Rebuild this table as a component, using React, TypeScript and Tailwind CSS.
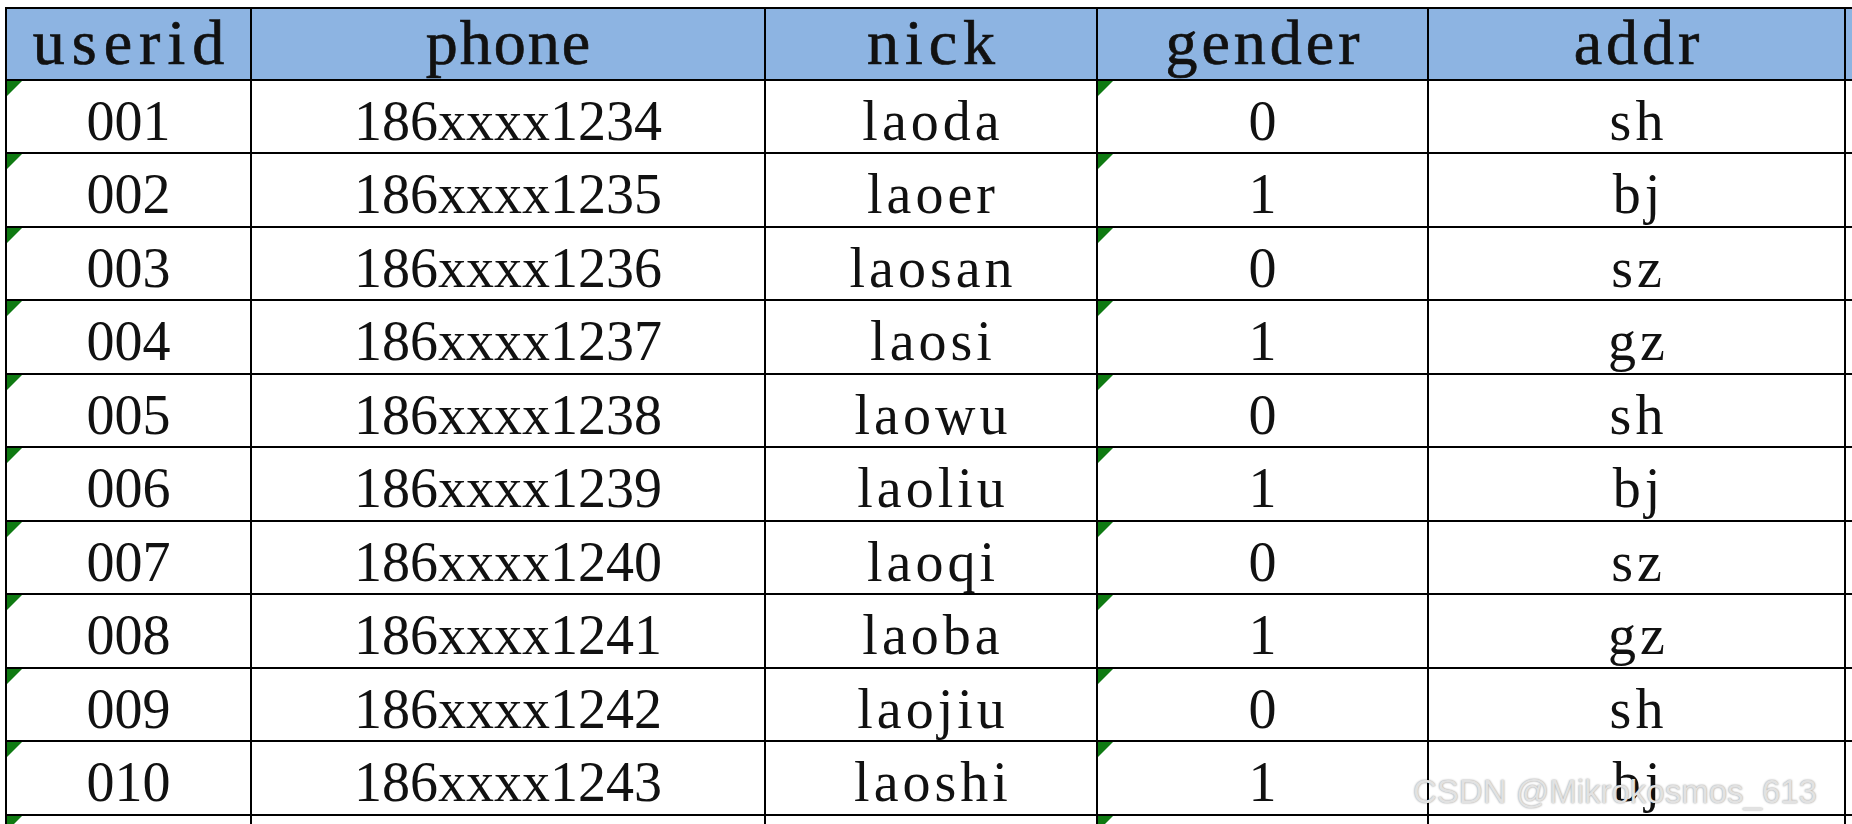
import React from 'react';

const rows = [
  ['001', '186xxxx1234', 'laoda', '0', 'sh'],
  ['002', '186xxxx1235', 'laoer', '1', 'bj'],
  ['003', '186xxxx1236', 'laosan', '0', 'sz'],
  ['004', '186xxxx1237', 'laosi', '1', 'gz'],
  ['005', '186xxxx1238', 'laowu', '0', 'sh'],
  ['006', '186xxxx1239', 'laoliu', '1', 'bj'],
  ['007', '186xxxx1240', 'laoqi', '0', 'sz'],
  ['008', '186xxxx1241', 'laoba', '1', 'gz'],
  ['009', '186xxxx1242', 'laojiu', '0', 'sh'],
  ['010', '186xxxx1243', 'laoshi', '1', 'bj'],
  ['', '', '', '', ''],
];

const headers = ['userid', 'phone', 'nick', 'gender', 'addr'];
// letter-spacing leaves a trailing gap, so pad the left by the same amount to stay centred
const headTrack = [
  'tracking-[7px] pl-[7px]',
  'tracking-[2px] pl-[2px]',
  'tracking-[6px] pl-[6px]',
  'tracking-[4px] pl-[4px]',
  'tracking-[4px] pl-[4px]',
];
const cellTrack = ['', '', 'tracking-[4px] pl-[4px]', '', 'tracking-[4px] pl-[4px]'];

const colW = ['w-[247px] border-l-2', 'w-[514px]', 'w-[332px]', 'w-[331px]', 'w-[417px]'];

// excel "number stored as text" marker
function Marker() {
  return (
    <svg className="absolute left-0 top-0" width="15" height="15" viewBox="0 0 15 15">
      <polygon points="0,0 15,0 0,15" fill="#0f7a12" />
    </svg>
  );
}

export default function App() {
  return (
    <div className="relative w-[1852px] h-[824px] overflow-hidden bg-white text-[#111]">
      <div className="pl-[5px] pt-[7px] font-['Liberation_Serif',serif]">
        {/* header */}
        <div className="flex h-[74px] border-t-2 border-b-2 border-black bg-[#8db4e2]">
          {headers.map((h, i) => (
            <div
              key={h}
              className={`${colW[i]} ${headTrack[i]} shrink-0 border-r-2 border-black flex justify-center pt-[2px] text-[64px] leading-none [-webkit-text-stroke:0.7px_#111]`}
            >
              {h}
            </div>
          ))}
          <div className="flex-1" />
        </div>

        {/* data rows */}
        {rows.map((r, ri) => (
          <div key={ri} className={`flex border-b-2 border-black ${ri % 2 === 0 ? 'h-[73px]' : 'h-[74px]'}`}>
            {r.map((c, ci) => (
              <div
                key={ci}
                className={`${colW[ci]} ${cellTrack[ci]} relative shrink-0 border-r-2 border-black flex justify-center pt-[12px] text-[56px] leading-none`}
              >
                {(ci === 0 || ci === 3) && <Marker />}
                {c}
              </div>
            ))}
            <div className="flex-1" />
          </div>
        ))}
      </div>

      {/* watermark */}
      <div className="absolute left-[1413px] top-[775px] font-['Liberation_Sans',Arial,sans-serif] text-[33px] leading-none text-[#e2e2e2] [text-shadow:0_0_2px_rgba(0,0,0,0.45)] whitespace-nowrap">
        CSDN @Mikrokosmos_613
      </div>
    </div>
  );
}
